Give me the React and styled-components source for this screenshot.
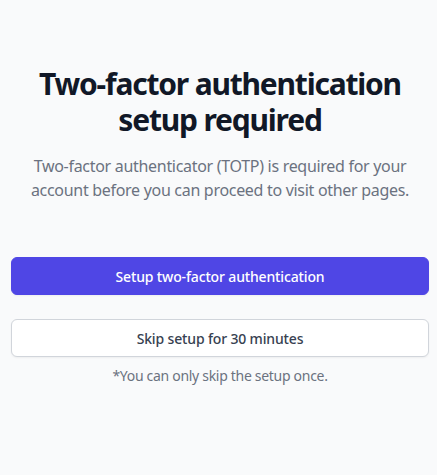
import styled, { createGlobalStyle } from "styled-components";

const GlobalStyle = createGlobalStyle`
  html, body {
    margin: 0;
    padding: 0;
    background: #f9fafb;
  }
  body {
    font-family: "Noto Sans", "Open Sans", sans-serif;
    -webkit-font-smoothing: antialiased;
  }
  * { box-sizing: border-box; }
`;

const Page = styled.div`
  min-height: 475px;
  background: #f9fafb;
  padding: 66px 8px 40px 11px;
  display: flex;
  flex-direction: column;
  align-items: stretch;
`;

const Header = styled.div`
  text-align: center;
  padding: 0 6px;
`;

const Title = styled.h2`
  margin: 0;
  font-size: 30px;
  line-height: 36px;
  font-weight: 700;
  color: #111827;
  letter-spacing: -1.2px;
`;

const Lead = styled.p`
  margin: 16px 0 0;
  font-size: 16px;
  line-height: 24px;
  color: #6b7280;
  letter-spacing: -0.3px;
`;

const Actions = styled.div`
  margin-top: 55px;
  display: flex;
  flex-direction: column;
  gap: 24px;
`;

const Button = styled.button`
  width: 100%;
  height: 38px;
  border-radius: 6px;
  font-family: inherit;
  font-size: 14px;
  font-weight: 500;
  letter-spacing: -0.15px;
  cursor: pointer;
  display: flex;
  align-items: center;
  justify-content: center;
  border: 1px solid ${(p) => (p.$primary ? "#4f46e5" : "#d1d5db")};
  background: ${(p) => (p.$primary ? "#4f46e5" : "#ffffff")};
  color: ${(p) => (p.$primary ? "#ffffff" : "#374151")};
  box-shadow: 0 1px 2px rgba(0, 0, 0, 0.05);
`;

const SkipGroup = styled.div`
  display: flex;
  flex-direction: column;
  gap: 9px;
`;

const Note = styled.p`
  margin: 0;
  text-align: center;
  font-size: 14px;
  line-height: 20px;
  color: #6b7280;
  letter-spacing: -0.3px;
`;

const App = () => {
  return (
    <>
      <GlobalStyle />
      <Page>
        <Header>
          <Title>Two-factor authentication setup required</Title>
          <Lead>
            Two-factor authenticator (TOTP) is required for your account before
            you can proceed to visit other pages.
          </Lead>
        </Header>
        <Actions>
          <Button $primary>Setup two-factor authentication</Button>
          <SkipGroup>
            <Button>Skip setup for 30 minutes</Button>
            <Note>*You can only skip the setup once.</Note>
          </SkipGroup>
        </Actions>
      </Page>
    </>
  );
};

export default App;
